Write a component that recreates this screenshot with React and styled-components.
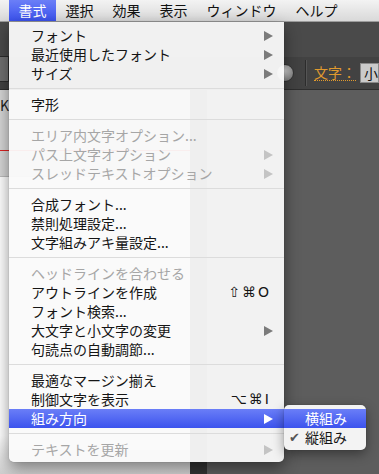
import styled, { createGlobalStyle } from 'styled-components'

const GlobalStyle = createGlobalStyle`
  html, body {
    margin: 0;
    padding: 0;
    height: 100%;
    overflow: hidden;
    background: #5d5d5d;
  }
  body {
    font-family: "Noto Sans CJK JP", "DejaVu Sans", sans-serif;
    font-size: 14px;
  }
`

const Screen = styled.div`
  position: relative;
  width: 379px;
  height: 474px;
  display: flex;
  flex-direction: column;
`

const MenuBar = styled.div`
  height: 21px;
  display: flex;
  padding-left: 9px;
  background: linear-gradient(#f3f3f3, #d9d9d9);
  border-bottom: 1px solid #9c9c9c;
`

const BarItem = styled.div`
  padding: 0 9.5px;
  line-height: 21px;
  font-size: 14px;
  color: ${({ active }) => (active ? '#fff' : '#111')};
  background: ${({ active }) => (active ? 'linear-gradient(#6b7ff7, #3b52ee)' : 'transparent')};
`

const AppBar = styled.div`
  height: 35px;
  background: #4a4a4a;
`

const Toolbar = styled.div`
  height: 32px;
  background: #424242;
  border-bottom: 1px solid #2e2e2e;
  display: flex;
  align-items: center;
  padding-left: 276px;
`

const LeftControl = styled.div`
  position: absolute;
  left: -20px;
  top: 56px;
  width: 27px;
  height: 24px;
  background: #6f6f6f;
  border: 1px solid #2c2c2c;
`

const Globe = styled.div`
  width: 16px;
  height: 16px;
  border-radius: 50%;
  background: radial-gradient(circle at 40% 35%, #e0e0e0, #8a8a8a 70%);
  border: 1px solid #333;
`

const ToolSep = styled.div`
  width: 1px;
  height: 26px;
  background: #2c2c2c;
  border-right: 1px solid #555;
  margin: 0 7px 0 11px;
`

const ToolLabel = styled.span`
  color: #e09a2e;
  font-size: 14px;
  border-bottom: 1px dotted #e09a2e;
  line-height: 15px;
  margin-right: 4px;
`

const FontField = styled.div`
  height: 18px;
  padding: 0 3px;
  background: #cacaca;
  border: 1px solid #8a8a8a;
  color: #111;
  font-size: 14px;
  line-height: 18px;
  white-space: nowrap;
  overflow: hidden;
  flex: 1;
`

const Main = styled.div`
  flex: 1;
  display: flex;
`

const DocPanel = styled.div`
  width: 190px;
  display: flex;
  flex-direction: column;
  background: linear-gradient(#fff 90%, #d0d0d0);
`

const PanelHead = styled.div`
  height: 86px;
  background: #d6d6d6;
  font-size: 14px;
  line-height: 30px;
  color: #222;
  border-bottom: 1px solid #bbb;
`

const RedRule = styled.div`
  margin-top: 30px;
  height: 1px;
  background: #d22;
`

const Divider = styled.div`
  width: 17px;
  background: #333;
`

const Canvas = styled.div`
  flex: 1;
  background: #5d5d5d;
`

const Menu = styled.div`
  position: absolute;
  left: 9px;
  top: 22px;
  width: 275px;
  padding: 4px 0 3px;
  background: rgba(250, 250, 250, 0.95);
  border-radius: 0 0 5px 5px;
  box-shadow: 0 6px 16px rgba(0, 0, 0, 0.45), 0 0 1px rgba(0, 0, 0, 0.4);
`

const Row = styled.div`
  position: relative;
  height: 19px;
  display: flex;
  align-items: center;
  padding: 0 11px 0 22px;
  font-size: 14px;
  line-height: 19px;
  white-space: nowrap;
  color: ${({ active, disabled }) => (active ? '#fff' : disabled ? '#a6a6a6' : '#151515')};
  background: ${({ active }) => (active ? 'linear-gradient(#6a7ef7, #3c53ee)' : 'transparent')};
`

const Label = styled.span`
  flex: 1;
`

const Arrow = styled.span`
  width: 0;
  height: 0;
  border-top: 5px solid transparent;
  border-bottom: 5px solid transparent;
  border-left: 9px solid ${({ active, disabled }) => (active ? '#fff' : disabled ? '#c4c4c4' : '#7b7b7b')};
`

const Shortcut = styled.span`
  font-family: "DejaVu Sans", sans-serif;
  font-size: 14px;
  letter-spacing: 2px;
  margin-right: 2px;
`

const Separator = styled.div`
  height: 1px;
  background: #dcdcdc;
  margin: 5px 0 6px;
`

const SubMenu = styled.div`
  position: absolute;
  left: 100%;
  top: -4px;
  width: 82px;
  padding: 4px 0 3px;
  background: rgba(248, 248, 248, 0.97);
  border-radius: 5px;
  box-shadow: 0 4px 12px rgba(0, 0, 0, 0.4), 0 0 1px rgba(0, 0, 0, 0.4);
`

const SubRow = styled.div`
  height: 19px;
  display: flex;
  align-items: center;
  font-size: 14px;
  line-height: 19px;
  color: ${({ active }) => (active ? '#fff' : '#151515')};
  background: ${({ active }) => (active ? 'linear-gradient(#6a7ef7, #3c53ee)' : 'transparent')};
`

const Check = styled.span`
  width: 21px;
  padding-left: 5px;
  box-sizing: border-box;
  font-family: "DejaVu Sans", sans-serif;
  font-size: 13px;
  color: #555;
`

const groups = [
  [
    { label: 'フォント', sub: true },
    { label: '最近使用したフォント', sub: true },
    { label: 'サイズ', sub: true },
  ],
  [{ label: '字形' }],
  [
    { label: 'エリア内文字オプション...', disabled: true },
    { label: 'パス上文字オプション', sub: true, disabled: true },
    { label: 'スレッドテキストオプション', sub: true, disabled: true },
  ],
  [
    { label: '合成フォント...' },
    { label: '禁則処理設定...' },
    { label: '文字組みアキ量設定...' },
  ],
  [
    { label: 'ヘッドラインを合わせる', disabled: true },
    { label: 'アウトラインを作成', shortcut: '⇧⌘O' },
    { label: 'フォント検索...' },
    { label: '大文字と小文字の変更', sub: true },
    { label: '句読点の自動調節...' },
  ],
  [
    { label: '最適なマージン揃え' },
    { label: '制御文字を表示', shortcut: '⌥⌘I' },
    { label: '組み方向', sub: true, active: true },
  ],
  [{ label: 'テキストを更新', sub: true, disabled: true }],
]

function MenuRow({ item }) {
  return (
    <Row active={item.active} disabled={item.disabled}>
      <Label>{item.label}</Label>
      {item.shortcut && <Shortcut>{item.shortcut}</Shortcut>}
      {item.sub && <Arrow active={item.active} disabled={item.disabled} />}
      {item.active && (
        <SubMenu>
          <SubRow active>
            <Check />
            横組み
          </SubRow>
          <SubRow>
            <Check>✔</Check>
            縦組み
          </SubRow>
        </SubMenu>
      )}
    </Row>
  )
}

export default function App() {
  const bar = ['書式', '選択', '効果', '表示', 'ウィンドウ', 'ヘルプ']

  return (
    <Screen>
      <GlobalStyle />
      <MenuBar>
        {bar.map((name, i) => (
          <BarItem key={name} active={i === 0}>
            {name}
          </BarItem>
        ))}
      </MenuBar>
      <AppBar />
      <Toolbar>
        <Globe />
        <ToolSep />
        <ToolLabel>文字：</ToolLabel>
        <FontField>小塚明</FontField>
      </Toolbar>
      <LeftControl />
      <Main>
        <DocPanel>
          <PanelHead>
            K
            <RedRule />
          </PanelHead>
        </DocPanel>
        <Divider />
        <Canvas />
      </Main>
      <Menu>
        {groups.map((group, gi) => (
          <div key={gi}>
            {gi > 0 && <Separator />}
            {group.map((item) => (
              <MenuRow key={item.label} item={item} />
            ))}
          </div>
        ))}
      </Menu>
    </Screen>
  )
}
